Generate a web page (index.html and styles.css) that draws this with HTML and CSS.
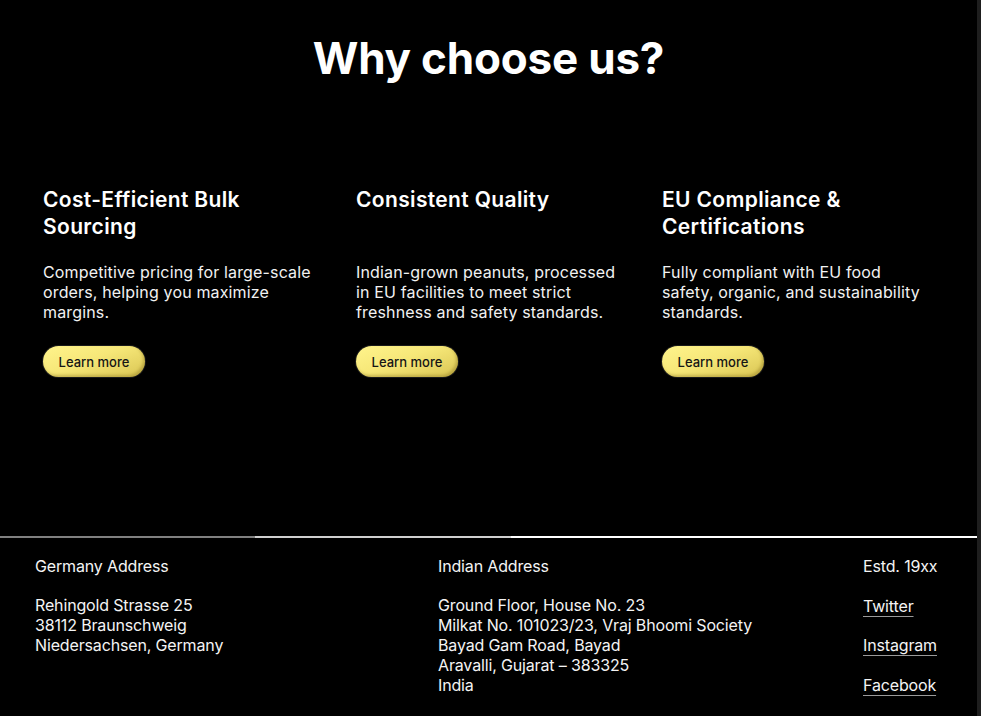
FILE: index.html
```html
<!DOCTYPE html>
<html lang="en">
<head>
<meta charset="utf-8">
<title>Why choose us?</title>
<link rel="stylesheet" href="styles.css">
</head>
<body>
<div class="page">
  <section class="why">
    <h1 class="why-title">Why choose us?</h1>
    <div class="features">
      <div class="feature">
        <h2 class="feature-title">Cost-Efficient Bulk Sourcing</h2>
        <p class="feature-text">Competitive pricing for large-scale orders, helping you maximize margins.</p>
        <a class="btn" href="#">Learn more</a>
      </div>
      <div class="feature">
        <h2 class="feature-title">Consistent Quality</h2>
        <p class="feature-text">Indian-grown peanuts, processed in EU facilities to meet strict freshness and safety standards.</p>
        <a class="btn" href="#">Learn more</a>
      </div>
      <div class="feature">
        <h2 class="feature-title">EU Compliance &amp; Certifications</h2>
        <p class="feature-text">Fully compliant with EU food safety, organic, and sustainability standards.</p>
        <a class="btn" href="#">Learn more</a>
      </div>
    </div>
  </section>
  <div class="divider"></div>
  <footer class="footer">
    <div class="fcol fcol-de">
      <div class="fhead">Germany Address</div>
      <div class="faddr">Rehingold Strasse 25<br>38112 Braunschweig<br>Niedersachsen, Germany</div>
    </div>
    <div class="fcol fcol-in">
      <div class="fhead">Indian Address</div>
      <div class="faddr">Ground Floor, House No. 23<br>Milkat No. 101023/23, Vraj Bhoomi Society<br>Bayad Gam Road, Bayad<br>Aravalli, Gujarat – 383325<br>India</div>
    </div>
    <div class="fcol fcol-links">
      <div class="fhead">Estd. 19xx</div>
      <a class="flink" href="#">Twitter</a>
      <a class="flink" href="#">Instagram</a>
      <a class="flink" href="#">Facebook</a>
    </div>
  </footer>
</div>
</body>
</html>
```
FILE: styles.css
```css
html {
  background: #1e1e1e;
}
body {
  margin: 0;
  width: 977px;
  min-height: 716px;
  background: #000;
  color: #fff;
  font-family: Inter, "Noto Sans", sans-serif;
}
.page {
  display: flex;
  flex-direction: column;
}
.why {
  height: 536px;
  padding-top: 31px;
  box-sizing: border-box;
}
.why-title {
  margin: 0;
  text-align: center;
  font-size: 44px;
  line-height: 54px;
  font-weight: 700;
  letter-spacing: -0.2px;
}
.features {
  display: grid;
  grid-template-columns: 313px 306px 1fr;
  padding-left: 43px;
  margin-top: 101px;
}
.feature {
  display: flex;
  flex-direction: column;
  align-items: flex-start;
}
.feature-title {
  margin: 0;
  font-size: 21px;
  line-height: 27px;
  font-weight: 600;
  letter-spacing: 0.35px;
  min-height: 54px;
  max-width: 250px;
}
.feature-text {
  margin: 22px 0 0;
  font-size: 16px;
  line-height: 20px;
  font-weight: 400;
  letter-spacing: 0.15px;
  color: #f2f2f2;
  max-width: 270px;
}
.btn {
  margin-top: 24px;
  width: 102px;
  height: 31px;
  box-sizing: border-box;
  border-radius: 16px;
  display: flex;
  align-items: center;
  justify-content: center;
  font-size: 13px;
  font-weight: 500;
  color: #151515;
  text-decoration: none;
  background: linear-gradient(160deg, #fff48c 0%, #f6e778 45%, #d9c553 100%);
  box-shadow: inset -2px -2px 3px rgba(120, 100, 20, 0.35), 0 0 0 1px #1a1a1a;
}
.divider {
  height: 2px;
  background: linear-gradient(90deg, #808080 0, #808080 255px, #cfcfcf 255px, #cfcfcf 511px, #fff 511px);
}
.footer {
  display: grid;
  grid-template-columns: 403px 425px 1fr;
  padding: 18px 0 0 35px;
  font-size: 16px;
  line-height: 20px;
  letter-spacing: -0.15px;
  color: #f4f4f4;
}
.fhead {
  margin-bottom: 19px;
}
.fcol-links {
  display: flex;
  flex-direction: column;
  gap: 19.5px;
}
.fcol-links .fhead {
  margin-bottom: 0;
}
.flink {
  color: #f4f4f4;
  text-decoration: underline;
  text-decoration-color: #9a9a9a;
  text-underline-offset: 4px;
}
```
